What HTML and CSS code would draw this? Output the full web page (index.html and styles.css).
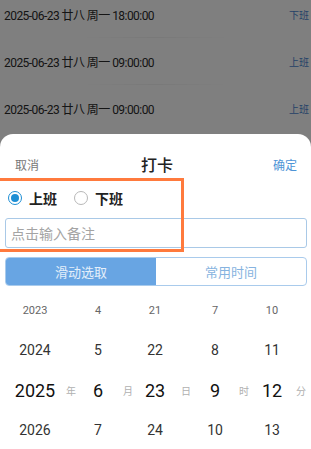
FILE: index.html
```html
<!DOCTYPE html>
<html lang="zh">
<head>
<meta charset="utf-8">
<link rel="stylesheet" href="styles.css">
</head>
<body>
<div class="list">
  <div class="row"><span class="time">2025-06-23 廿八 周一 18:00:00</span><span class="tag">下班</span></div>
  <div class="sep"></div>
  <div class="row"><span class="time">2025-06-23 廿八 周一 09:00:00</span><span class="tag">上班</span></div>
  <div class="sep"></div>
  <div class="row"><span class="time">2025-06-23 廿八 周一 09:00:00</span><span class="tag">上班</span></div>
</div>
<div class="mask"></div>
<div class="sheet">
  <div class="header">
    <span class="cancel">取消</span>
    <span class="title">打卡</span>
    <span class="ok">确定</span>
  </div>
  <div class="radios">
    <label class="radio"><span class="circle on"></span><span>上班</span></label>
    <label class="radio"><span class="circle"></span><span>下班</span></label>
  </div>
  <div class="input">点击输入备注</div>
  <div class="seg">
    <div class="seg-item active">滑动选取</div>
    <div class="seg-item">常用时间</div>
  </div>
  <div class="picker">
    <div class="v r1">2023</div><div class="u"></div><div class="v r1">4</div><div class="u"></div><div class="v r1">21</div><div class="u"></div><div class="v r1">7</div><div class="u"></div><div class="v r1">10</div><div class="u"></div>
    <div class="v r2">2024</div><div class="u"></div><div class="v r2">5</div><div class="u"></div><div class="v r2">22</div><div class="u"></div><div class="v r2">8</div><div class="u"></div><div class="v r2">11</div><div class="u"></div>
    <div class="v sel">2025</div><div class="u">年</div><div class="v sel">6</div><div class="u">月</div><div class="v sel">23</div><div class="u">日</div><div class="v sel">9</div><div class="u">时</div><div class="v sel">12</div><div class="u">分</div>
    <div class="v r2">2026</div><div class="u"></div><div class="v r2">7</div><div class="u"></div><div class="v r2">24</div><div class="u"></div><div class="v r2">10</div><div class="u"></div><div class="v r2">13</div><div class="u"></div>
  </div>
  <div class="highlight"></div>
</div>
</body>
</html>
```
FILE: styles.css
```css
* { box-sizing: border-box; }
html, body {
  margin: 0;
  width: 311px;
  height: 449px;
  overflow: hidden;
  background: #fff;
  font-family: Roboto, "Noto Sans CJK SC", sans-serif;
}
.list {
  margin-top: -9px;
}
.row {
  height: 47px;
  display: flex;
  align-items: center;
  justify-content: space-between;
  padding: 0 2px 0 4px;
}
.row .time {
  font-size: 12px;
  letter-spacing: -0.55px;
  color: #2a2a2a;
}
.row .tag {
  font-size: 10px;
  color: #4c86d0;
}
.sep {
  height: 1px;
  margin-top: -1px;
  background: linear-gradient(to right, rgba(0,0,0,0) 25%, rgba(0,0,0,0.05) 50%, rgba(0,0,0,0) 75%);
}
.mask {
  position: absolute;
  inset: 0;
  background: rgba(0, 0, 0, 0.5);
}
.sheet {
  position: absolute;
  left: 0;
  right: 0;
  top: 134px;
  bottom: 0;
  background: #fff;
  border-radius: 13px 13px 0 0;
}
.header {
  display: flex;
  align-items: center;
  justify-content: space-between;
  height: 20px;
  margin-top: 20px;
  padding: 0 14px 0 15px;
}
.cancel {
  font-size: 12px;
  color: #777;
}
.title {
  font-size: 16px;
  font-weight: 500;
  color: #222;
  margin-left: 2px;
}
.ok {
  font-size: 12px;
  color: #4d94d6;
}
.radios {
  display: flex;
  align-items: center;
  gap: 17px;
  height: 24px;
  margin-top: 12px;
  padding-left: 8px;
}
.radio {
  display: flex;
  align-items: center;
  gap: 7px;
  font-size: 14px;
  font-weight: 700;
  color: #222;
}
.circle {
  width: 14px;
  height: 14px;
  border-radius: 50%;
  border: 1px solid #b8b8b8;
  display: flex;
  align-items: center;
  justify-content: center;
}
.circle.on {
  border: 1.5px solid #1d8ed4;
}
.circle.on::after {
  content: "";
  width: 8px;
  height: 8px;
  border-radius: 50%;
  background: #1d8ed4;
}
.input {
  margin: 8px 4px 0 5px;
  height: 30px;
  border: 1px solid #a9c9e7;
  border-radius: 3px;
  display: flex;
  align-items: center;
  padding-left: 5px;
  font-size: 14px;
  color: #a4a4a4;
}
.seg {
  display: flex;
  margin: 9px 4px 0 5px;
  height: 29px;
  border: 1px solid #a9cbec;
  border-radius: 4px;
  overflow: hidden;
}
.seg-item {
  flex: 1;
  display: flex;
  align-items: center;
  justify-content: center;
  font-size: 13px;
  color: #86b3e0;
}
.seg-item.active {
  background: #68a5e3;
  color: #e4effa;
}
.picker {
  display: grid;
  grid-template-columns: 58px 14px 40px 20px 34px 28px 30px 28px 28px 30px;
  grid-auto-rows: 40px;
  margin-top: 4px;
  padding-left: 6px;
  align-items: center;
  text-align: center;
}
.v.r1 { font-size: 11px; color: #666; }
.v.r2 { font-size: 14px; color: #333; }
.v.sel { font-size: 18px; color: #111; font-weight: 400; }
.u { font-size: 10px; color: #b0b0b0; }
.highlight {
  position: absolute;
  left: -6px;
  top: 44px;
  width: 190px;
  height: 74px;
  border: 3px solid #ff7a3d;
  pointer-events: none;
}
```
